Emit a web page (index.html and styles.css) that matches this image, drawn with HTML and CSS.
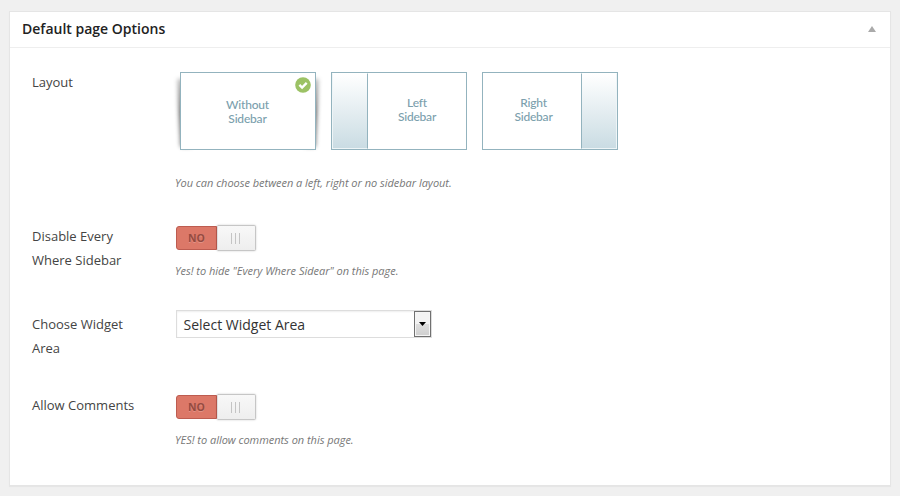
FILE: index.html
```html
<!DOCTYPE html>
<html lang="en">
<head>
<meta charset="utf-8">
<title>Default page Options</title>
<link rel="stylesheet" href="styles.css">
</head>
<body>
<section class="panel">
  <header class="panel-head">
    <h3>Default page Options</h3>
    <svg class="collapse" width="8" height="6" viewBox="0 0 8 6"><path d="M4 0L8 6H0z" fill="#aaa"/></svg>
  </header>
  <div class="options">
    <div class="label">Layout</div>
    <div class="field layout-field">
      <div class="layouts">
        <div class="card selected">
          <div class="card-body"><span>Without<br>Sidebar</span></div>
          <svg class="check" width="16" height="16" viewBox="0 0 16 16"><circle cx="8" cy="8" r="7.8" fill="#9cc265"/><path d="M4.4 7.8l2.7 2.7 4.6-4.6" fill="none" stroke="#fff" stroke-width="2.4"/></svg>
        </div>
        <div class="card"><div class="side side-left"></div><div class="card-body"><span>Left<br>Sidebar</span></div></div>
        <div class="card"><div class="card-body body-left"><span>Right<br>Sidebar</span></div><div class="side side-right"></div></div>
      </div>
      <p class="hint">You can choose between a left, right or no sidebar layout.</p>
    </div>

    <div class="label">Disable Every Where Sidebar</div>
    <div class="field">
      <div class="toggle"><span class="no">NO</span><span class="knob"><i></i><i></i><i></i></span></div>
      <p class="hint">Yes! to hide "Every Where Sidear" on this page.</p>
    </div>

    <div class="label">Choose Widget Area</div>
    <div class="field">
      <div class="select"><span>Select Widget Area</span><b class="drop"><svg width="7" height="4" viewBox="0 0 7 4"><path d="M0 0H7L3.5 4z"/></svg></b></div>
    </div>

    <div class="label">Allow Comments</div>
    <div class="field">
      <div class="toggle"><span class="no">NO</span><span class="knob"><i></i><i></i><i></i></span></div>
      <p class="hint">YES! to allow comments on this page.</p>
    </div>
  </div>
</section>
</body>
</html>
```
FILE: styles.css
```css
* { box-sizing: border-box; }
body {
  margin: 0;
  padding: 11px 9px 0;
  height: 496px;
  overflow: hidden;
  background: #f0f0f0;
  color: #444;
  font: 13px/24px "Open Sans", sans-serif;
}
.panel {
  position: relative;
  z-index: 0;
  height: 475px;
  background: #fff;
  border: 1px solid #e5e5e5;
  box-shadow: 0 1px 1px rgba(0,0,0,.04);
}
.panel-head {
  display: flex;
  align-items: center;
  justify-content: space-between;
  height: 36px;
  padding: 0 14px 0 12px;
  border-bottom: 1px solid #eee;
}
h3 { margin: 0; padding-bottom: 2px; font-size: 14px; font-weight: 600; line-height: 20px; color: #222; }
.collapse { display: block; margin-bottom: 1px; }
.options {
  display: grid;
  grid-template-columns: 143px 1fr;
  grid-template-rows: 154px 88px 81px 70px;
  padding: 22px 22px 0;
}
.label { padding-right: 35px; }
.layouts { display: flex; gap: 15px; padding: 2px 0 0 5px; }
.card {
  position: relative;
  display: flex;
  width: 136px;
  height: 78px;
  border: 1px solid #93b3be;
  background: #fff;
}
.card-body {
  flex: 1;
  display: flex;
  align-items: center;
  justify-content: center;
  padding-bottom: 2px;
  background: #fff;
  color: #7ba0ad;
  font: 500 12px/14px Lato, sans-serif;
  letter-spacing: -.2px;
  text-align: center;
}
.body-left { padding-left: 3px; }
.selected .card-body { padding: 2px 1px 0 0; }
.selected::before, .selected::after {
  content: "";
  position: absolute;
  z-index: -1;
  top: 6px;
  width: 10px;
  height: 68px;
  background: linear-gradient(rgba(0,0,0,.25), rgba(0,0,0,.62) 50%, rgba(0,0,0,.55));
  filter: blur(2px);
}
.selected::before { left: -2px; transform: skewX(2.5deg); }
.selected::after { right: -2px; transform: skewX(-2.5deg); }
.check { position: absolute; top: 4px; right: 4px; }
.side {
  width: 36px;
  border: 1px solid #eef5f7;
  border-top-color: #fff;
  background: linear-gradient(#fff, #cadce3);
}
.side-left { border-right-color: #93b3be; }
.side-right { border-left-color: #93b3be; }
.hint { margin: 0; color: #777; font-size: 11px; font-style: italic; line-height: 18px; letter-spacing: -.025px; }
.layout-field .hint { margin-top: 24px; }
.toggle { display: flex; width: 81px; height: 28px; padding-left: 1px; }
.no {
  width: 41px;
  height: 24px;
  margin-top: 2px;
  border: 1px solid #bd5c50;
  border-radius: 3px 0 0 3px;
  background: #dc7868;
  color: #954a40;
  font-size: 10.5px;
  font-weight: 700;
  line-height: 23px;
  text-align: center;
  text-shadow: 0 1px 0 rgba(255,255,255,.2);
}
.knob {
  display: flex;
  align-items: center;
  justify-content: center;
  gap: 3px;
  width: 39px;
  height: 26px;
  margin-top: 1px;
  padding-right: 2px;
  border: 1px solid #c6c6c6;
  border-left-color: #ddd;
  border-radius: 0 2px 2px 0;
  background: linear-gradient(#f8f8f8, #eee);
  box-shadow: 0 0 2px rgba(0,0,0,.22);
}
.knob i { width: 1px; height: 11px; background: #c4c4c4; }
.toggle + .hint { margin-top: 10px; }
.select {
  display: flex;
  justify-content: space-between;
  width: 256px;
  height: 28px;
  margin: -2px 0 0 1px;
  padding-left: 6.5px;
  border: 1px solid #ddd;
  box-shadow: inset 0 1px 2px rgba(0,0,0,.07);
  color: #333;
  font-size: 14px;
  line-height: 27px;
}
.drop {
  display: flex;
  align-items: center;
  justify-content: center;
  width: 17px;
  height: 26px;
  border: 1px solid #707070;
  background: linear-gradient(#f3f3f3 48%, #dedede 52%, #cfcfcf);
  box-shadow: inset 0 0 0 1px #f5f5f5;
}
```
